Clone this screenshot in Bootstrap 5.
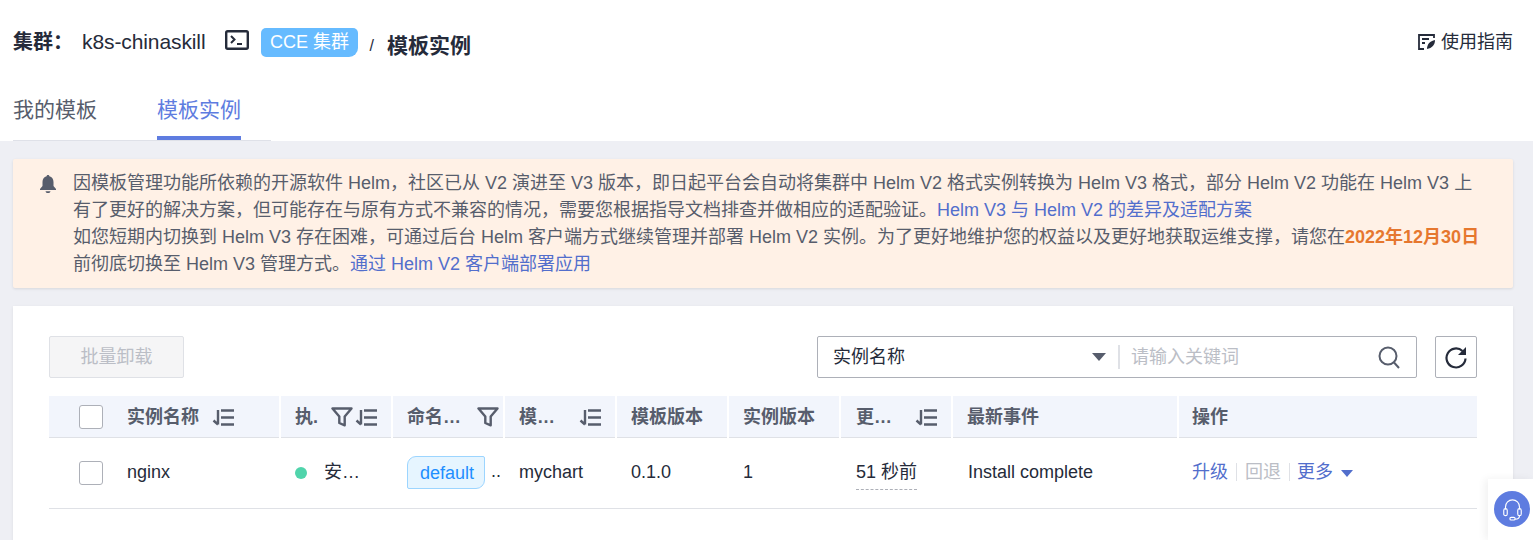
<!DOCTYPE html>
<html lang="zh"><head><meta charset="utf-8"><title>模板实例</title>
<link href="https://cdn.jsdelivr.net/npm/bootstrap@5.3.0/dist/css/bootstrap.min.css" rel="stylesheet">
<style>
html,body{height:540px;overflow:hidden}
body{background:#eeeff4;font-family:"Liberation Sans","Noto Sans CJK SC",sans-serif;font-size:18px;color:#252b3a;line-height:27px;position:relative}
a{text-decoration:none;color:#526ecc}
.top-head{background:#fff;height:141px;padding:0 20px 0 13px}
.title-row{height:82px}
.cluster-lbl{font-weight:700;font-size:20px;margin-right:9px;white-space:nowrap}
.colon-mark{font-family:"Noto Sans CJK TC",sans-serif}
.cluster-name{font-size:21px;line-height:27px;letter-spacing:-.1px}
.term-ico{margin-left:20px;margin-top:-2px}
.page-ttl{font-weight:700;font-size:21px;margin-top:8px}
.cce-tag{background:#66bbff;color:#fff;height:29px;line-height:29px;padding:0 8.500px;border-radius:5px 5px 9px 5px;margin:3px 12px 0 12px}
.crumb-sep{font-size:16px;margin:9px 13px 0 0}
.tab-bar{width:258px;height:53px;margin-top:6px;border-bottom:1px solid #dfe1e8;gap:60px}
.tab-item{font-size:21px;color:#575d6c;height:52px;line-height:44px}
.tab-on{color:#5e7ce0;border-bottom:4px solid #5e7ce0}
.notice{margin:18px 20px 0 13px;background:#fff1e6;height:129px;padding:11px 20px 0 26px;border-radius:2px;box-shadow:0 1px 3px rgba(0,0,0,.1);color:#575d6c;white-space:nowrap;gap:16px}
.notice strong{color:#e6772e}
.panel{margin:18px 20px 0 13px;background:#fff;height:240px;padding:30px 36px 0;box-shadow:0 1px 3px rgba(0,0,0,.08)}
.batch-btn{width:135px;height:42px;background:#f5f5f6;border:1px solid #dfe1e6;border-radius:2px;color:#bbbec6;font-size:18px;padding:0;line-height:40px}
.search-box{width:600px;height:42px;border:1px solid #adb0b8;border-radius:2px;margin-right:18px}
.sel-part{width:300px;padding:0 12px 0 15px;height:40px;line-height:40px;color:#252b3a}
.sel-caret{width:0;height:0;border-left:7px solid transparent;border-right:7px solid transparent;border-top:8px solid #575d6c}
.v-line{width:2px;height:24px;background:#dfe1e6}
.search-input{flex:1;padding:0 11px;color:#bbbec6;line-height:40px}
.icon-btn{width:42px;height:42px;border:1px solid #adb0b8;border-radius:2px}
.guide-shift{margin-top:2px}
.data-grid{width:1428px;table-layout:fixed;margin:18px 0 0;border-collapse:collapse}
.data-grid th{height:41px;background:#f2f5fc;border-bottom:1px solid #dfe1e6;border-right:2px solid #fff;padding:2px 0 0 14px;color:#575d6c;font-weight:700;white-space:nowrap;overflow:hidden;vertical-align:middle}
.data-grid th:last-child{border-right:0;padding-left:13px}
.data-grid td{height:71px;border-bottom:1px solid #dfe1e6;padding:0 0 0 15px;white-space:nowrap;vertical-align:middle;overflow:hidden}
.data-grid td:last-child{padding-left:14px}
.data-grid .th-wide{padding-left:15px}
.data-grid .td-nudge{padding-left:16px}
.check-cell{display:flex;gap:24px;align-items:center;padding-left:15px}
.fake-check{display:block;width:24px;height:24px;border:1px solid #adb0b8;border-radius:3px;background:#fff;flex:none}
.head-cell{display:flex;align-items:center;justify-content:space-between;padding-right:14px}
.head-tight{padding-right:4px}
.icon-set{display:flex;align-items:center;gap:2px}
.sort-near{margin-left:-11px}
.run-dot{display:inline-block;width:12px;height:12px;border-radius:50%;background:#50d4ab;margin-right:17px;vertical-align:-1px}
.ns-tag{display:inline-block;height:33px;line-height:33px;padding:0 10px 0 12px;background:#e6f5ff;border:1px solid #9cd5ff;border-radius:9px 2px 9px 2px;color:#1e8fff;font-size:18px;margin-right:6px;vertical-align:middle}
.time-txt{display:inline-block;border-bottom:1px dashed #adb0b8;padding:3px 0;vertical-align:middle}
.op-sep{display:inline-block;width:1px;height:18px;background:#dfe1e6;margin:0 8px;vertical-align:-3px}
.op-sep-b{margin-right:7px}
.op-dis{color:#bbbec6}
.op-caret{display:inline-block;width:0;height:0;border-left:6px solid transparent;border-right:6px solid transparent;border-top:7px solid #526ecc;margin-left:8px;vertical-align:1px}
.guide-link{color:#252b3a}
.help-float{position:absolute;right:0;bottom:0;width:45px;height:61px;background:#fff;box-shadow:-3px 0 8px rgba(0,0,0,.06)}
.help-disc{width:36px;height:36px;border-radius:50%;background:#5e7ce0;margin:12px 0 0 6px}
</style></head><body>
<svg width="0" height="0" class="d-block" aria-hidden="true"><defs>
<symbol id="sort-sym" viewBox="0 0 22 17"><path d="M6 1v14.500M1.500 11.500L6 15.500M9 1.500h13M9 8.500h13M9 15.500h13" fill="none" stroke="#575d6c" stroke-width="2.400"/></symbol>
<symbol id="filter-sym" viewBox="0 0 22 20"><path d="M1.500 1.500h19l-6.800 8v8.800l-5.400-2.300v-6.500z" fill="none" stroke="#575d6c" stroke-width="2.400" stroke-linejoin="round"/></symbol>
</defs></svg>
<div class="top-head">
  <div class="title-row d-flex align-items-center">
    <span class="cluster-lbl">集群<span class="colon-mark">：</span></span><span class="cluster-name">k8s-chinaskill</span>
    <svg class="term-ico" width="24" height="20" viewBox="0 0 24 20" fill="none" stroke="#252b3a" stroke-width="2.400"><rect x="1.200" y="1.200" width="21.600" height="17.600" rx="1.500"/><path d="M6 6l3.500 3.500L6 13M12 14h5" stroke-width="2"/></svg>
    <span class="cce-tag">CCE 集群</span>
    <span class="crumb-sep">/</span>
    <span class="page-ttl">模板实例</span>
    <a class="guide-link guide-shift ms-auto d-flex align-items-center gap-1" href="#">
      <svg width="20" height="18" viewBox="0 0 20 18" fill="none" stroke="#252b3a" stroke-width="1.800"><path d="M17 5V2H2v14h5M5 6h7M5 10h3"/><path d="M10 16c0-5 3-8 8-9 0 5-3 8-8 9z" fill="#252b3a" stroke="none"/></svg>使用指南</a>
  </div>
  <div class="tab-bar d-flex">
    <div class="tab-item">我的模板</div>
    <div class="tab-item tab-on">模板实例</div>
  </div>
</div>
<div class="notice d-flex">
  <svg class="flex-none mt-1" width="18" height="20" viewBox="0 0 18 20" fill="#575d6c"><path d="M9 1c.8 0 1.300.5 1.400 1.200C13 3 14.500 5 14.500 8v4l2.500 3v1H1v-1l2.500-3V8c0-3 1.500-5 4.100-5.800C7.700 1.500 8.200 1 9 1z"/><path d="M6.500 17.200h5C11.200 18.500 10.300 19 9 19s-2.200-.5-2.500-1.800z"/></svg>
  <div>因模板管理功能所依赖的开源软件 Helm，社区已从 V2 演进至 V3 版本，即日起平台会自动将集群中 Helm V2 格式实例转换为 Helm V3 格式，部分 Helm V2 功能在 Helm V3 上<br>有了更好的解决方案，但可能存在与原有方式不兼容的情况，需要您根据指导文档排查并做相应的适配验证。<a href="#">Helm V3 与 Helm V2 的差异及适配方案</a><br>如您短期内切换到 Helm V3 存在困难，可通过后台 Helm 客户端方式继续管理并部署 Helm V2 实例。为了更好地维护您的权益以及更好地获取运维支撑，请您在<strong>2022年12月30日</strong><br>前彻底切换至 Helm V3 管理方式。<a href="#">通过 Helm V2 客户端部署应用</a></div>
</div>
<div class="panel">
  <div class="d-flex align-items-center">
    <button class="batch-btn" type="button" disabled>批量卸载</button>
    <div class="search-box ms-auto d-flex align-items-center">
      <div class="sel-part d-flex align-items-center justify-content-between">实例名称<span class="sel-caret"></span></div>
      <span class="v-line"></span>
      <div class="search-input">请输入关键词</div>
      <svg class="me-3" width="22" height="23" viewBox="0 0 22 23" fill="none" stroke="#575d6c" stroke-width="2"><circle cx="10" cy="10" r="8.500"/><path d="M16 16.500l5 5.500"/></svg>
    </div>
    <div class="icon-btn d-flex align-items-center justify-content-center">
      <svg width="22" height="23" viewBox="0 0 22 23" fill="none" stroke="#252b3a" stroke-width="2.200"><path d="M17.500 5A9.500 9.500 0 1 0 20.500 12.500"/><path d="M21 1v8h-8z" fill="#252b3a" stroke="none"/></svg>
    </div>
  </div>
  <table class="data-grid">
    <colgroup><col style="width:231px"><col style="width:112px"><col style="width:112px"><col style="width:112px"><col style="width:112px"><col style="width:112px"><col style="width:112px"><col style="width:226px"><col></colgroup>
    <thead><tr>
      <th class="th-wide"><div class="check-cell"><span class="fake-check"></span><span>实例名称</span><svg class="sort-near" width="22" height="17"><use href="#sort-sym"/></svg></div></th>
      <th><div class="head-cell"><span>执.</span><span class="icon-set"><svg width="22" height="20"><use href="#filter-sym"/></svg><svg width="22" height="17"><use href="#sort-sym"/></svg></span></div></th>
      <th><div class="head-cell head-tight"><span>命名…</span><svg width="22" height="20"><use href="#filter-sym"/></svg></div></th>
      <th><div class="head-cell"><span>模…</span><svg width="22" height="17"><use href="#sort-sym"/></svg></div></th>
      <th>模板版本</th>
      <th>实例版本</th>
      <th class="th-wide"><div class="head-cell"><span>更…</span><svg width="22" height="17"><use href="#sort-sym"/></svg></div></th>
      <th>最新事件</th>
      <th>操作</th>
    </tr></thead>
    <tbody><tr>
      <td><div class="check-cell"><span class="fake-check"></span><span>nginx</span></div></td>
      <td><span class="run-dot"></span>安…</td>
      <td><span class="ns-tag">default</span>..</td>
      <td>mychart</td>
      <td>0.1.0</td>
      <td>1</td>
      <td class="td-nudge"><span class="time-txt">51 秒前</span></td>
      <td class="td-nudge">Install complete</td>
      <td><a href="#">升级</a><span class="op-sep"></span><span class="op-dis">回退</span><span class="op-sep op-sep-b"></span><a href="#">更多<span class="op-caret"></span></a></td>
    </tr></tbody>
  </table>
</div>
<div class="help-float"><div class="help-disc d-flex align-items-center justify-content-center">
  <svg width="21" height="23" viewBox="0 0 24 26" fill="none" stroke="#fff" stroke-width="1.300"><path d="M4 13V10a8 8 0 0 1 16 0v3"/><rect x="2" y="12" width="4" height="8" rx="2"/><rect x="18" y="12" width="4" height="8" rx="2"/><path d="M20 20c0 3-3 4-5 4"/><rect x="9" y="22" width="6" height="3" rx="1.500"/></svg>
</div></div>
</body></html>
